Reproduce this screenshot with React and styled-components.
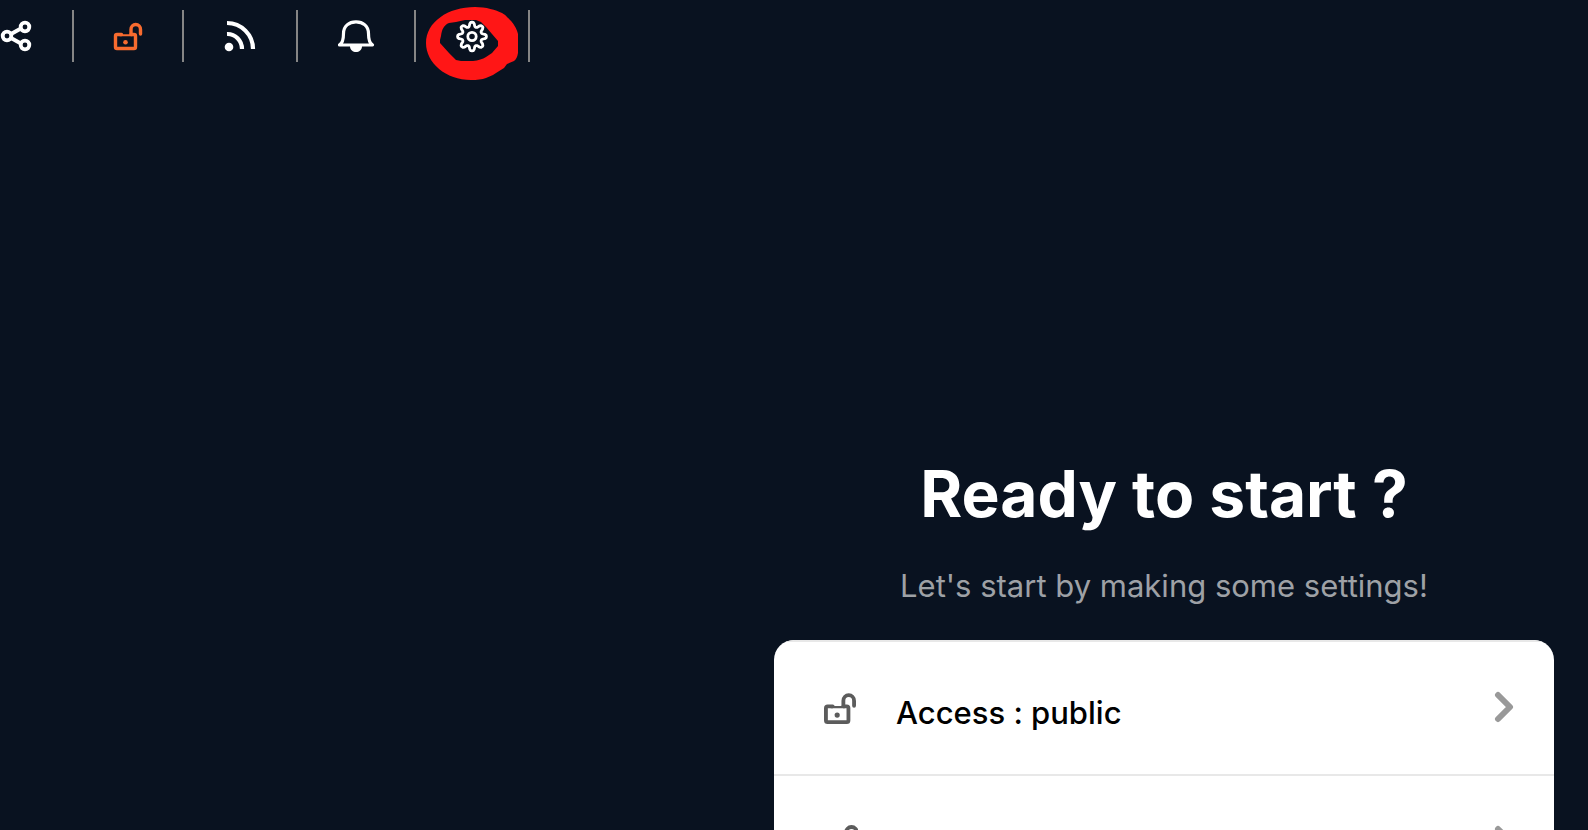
import React from 'react';
import styled, { createGlobalStyle } from 'styled-components'

function ShareIcon() {
    return (
        <svg width='34' height='36' viewBox='0 0 34 36' fill='none' stroke='#fff' strokeWidth='3.8'>
            <path d='M11 16 L20 11 M11 20 L20 25'/>
            <circle cx='7' cy='18' r='4.3'/>
            <circle cx='25' cy='9' r='4.3'/>
            <circle cx='25' cy='27' r='4.3'/>
        </svg>
    );
}

function UnlockIcon({ color, size = 32 }) {
    return (
        <svg width={size} height={size} viewBox='0 0 32 32' fill='none' stroke={color} strokeWidth='3.4' strokeLinecap='round' strokeLinejoin='round'>
            <path d='M9.5 14.5 H5 Q3.5 14.5 3.5 16 V27 Q3.5 28.5 5 28.5 H22 Q23.5 28.5 23.5 27 V16 Q23.5 14.5 22 14.5 H19'/>
            <path d='M8 15.2 H20' strokeWidth='2'/>
            <path d='M19 14 V9.5 A4.75 5 0 0 1 28.5 9.5 V14'/>
            <circle cx='13.5' cy='22.3' r='2.3' fill={color} stroke='none'/>
        </svg>
    );
}

function LockIcon() {
    return (
        <svg width='36' height='36' viewBox='0 0 36 36' fill='none' stroke='#5c5c5c' strokeWidth='4'>
            <path d='M24 16 V9 A5.5 6 0 0 1 35 9 V16'/>
        </svg>
    );
}

function FeedIcon() {
    return (
        <svg width='36' height='36' viewBox='0 0 36 36' fill='none' stroke='#fff' strokeWidth='4.2'>
            <circle cx='7' cy='29' r='4.3' fill='#fff' stroke='none'/>
            <path d='M5 16 A14.5 15 0 0 1 20 31'/>
            <path d='M5 5 A26 26 0 0 1 31 31'/>
        </svg>
    );
}

function BellIcon() {
    return (
        <svg width='40' height='36' viewBox='0 0 40 36' fill='none' stroke='#fff' strokeWidth='3.2' strokeLinejoin='round'>
            <path d='M3.5 27 C7 25 7.5 21 7.5 15.5 C7.5 8 13 3.8 20 3.8 C27 3.8 32.5 8 32.5 15.5 C32.5 21 33 25 36.5 27 Z'/>
            <path d='M14 28 H26 C26 36 14 36 14 28 Z' fill='#fff' stroke='none'/>
        </svg>
    );
}

// eight-toothed wheel, outline only
const gearOutline = Array.from({ length: 73 }, (_, i) => {
    const angle = (i * 5 * Math.PI) / 180;
    const radius = 12.2 + 2.4 * Math.tanh(1.6 * Math.cos(8 * angle));
    return `${(18 + radius * Math.sin(angle)).toFixed(2)} ${(18.5 - radius * Math.cos(angle)).toFixed(2)}`;
}).join(' L');

function GearIcon() {
    return (
        <svg width='36' height='36' viewBox='0 0 36 36' fill='none' stroke='#fff' strokeWidth='2.8' strokeLinejoin='round'>
            <path d={`M${gearOutline} Z`}/>
            <circle cx='18' cy='18.5' r='4.2'/>
        </svg>
    );
}

function Highlight() {
    return (
        <HighlightMark viewBox='0 0 92 73' aria-hidden='true'>
            <path
                fill='#ff1616'
                fillRule='evenodd'
                d='M49 0 C60 0 70 3 76 6 Q80 8 82 11 C87 15 91 22 92 27 V46 Q91 52 88 54 L81 57 L78 61 L70 66 L67 68 L60 71 Q54 73 45 73 C20 73 0 56 0 36 C0 15 22 0 49 0 Z
                M23 16 C18 18 16 22 15 29 L14 33 V36 L23 46 L30 53 L35 54 H47 Q55 53 60 50 L66 46 L72 39 V34 L66 27 L60 20 L55 15 L50 13 H39 L30 15 Z'
            />
        </HighlightMark>
    );
}

function SettingRow({ label, name, icon }) {
    return (
        <Row type='button' aria-label={name}>
            {icon}
            <RowLabel>{label}</RowLabel>
            <svg width='20' height='34' viewBox='0 0 20 34' fill='none' stroke='#999' strokeWidth='6' strokeLinecap='round' strokeLinejoin='round'>
                <path d='M4 4 L16 16 L4 28'/>
            </svg>
        </Row>
    );
}

function App() {
    return (
        <Page>
            <GlobalStyle/>
            <Toolbar>
                <ToolButton $first aria-label='Share'><ShareIcon/></ToolButton>
                <ToolButton aria-label='Access'><UnlockIcon color='#f76b2f'/></ToolButton>
                <ToolButton aria-label='Feed'><FeedIcon/></ToolButton>
                <ToolButton aria-label='Notifications'><BellIcon/></ToolButton>
                <ToolButton aria-label='Settings'>
                    <Highlight/>
                    <GearIcon/>
                </ToolButton>
            </Toolbar>
            <Start>
                <Title>Ready to start ?</Title>
                <Subtitle>Let's start by making some settings!</Subtitle>
                <Card>
                    <SettingRow label='Access : public' icon={<UnlockIcon color='#5c5c5c' size={36}/>}/>
                    <SettingRow name='Security' icon={<LockIcon/>}/>
                </Card>
            </Start>
        </Page>
    );
}

export default App;

const GlobalStyle = createGlobalStyle`
    * {
        box-sizing: border-box;
    }

    body {
        margin: 0;
        background: #091220;
        font-family: Inter, 'Liberation Sans', sans-serif;
    }
`;

const Page = styled.main`
    display: flex;
    flex-direction: column;
    height: 100vh;
    overflow: hidden;
`;

const Toolbar = styled.nav`
    display: flex;
    flex-shrink: 0;
    padding-top: 10px;
`;

const ToolButton = styled.button`
    position: relative;
    display: flex;
    align-items: center;
    height: 52px;
    padding: 0 38px 0 ${({ $first }) => $first ? '0' : '38px'};
    border: 0;
    border-right: 2px solid #858585;
    background: none;
    cursor: pointer;

    svg {
        position: relative;
        flex-shrink: 0;
    }
`;

const HighlightMark = styled.svg`
    && {
        position: absolute;
        top: -3px;
        left: 10px;
        width: 92px;
        height: 73px;
    }
`;

const Start = styled.section`
    align-self: flex-end;
    flex-shrink: 0;
    width: 780px;
    max-width: 100%;
    padding-top: 390px;
    margin-right: 34px;
    text-align: center;
`;

const Title = styled.h1`
    margin: 0;
    color: #fff;
    font-size: 64px;
    line-height: 84px;
    font-weight: 700;
`;

const Subtitle = styled.p`
    margin: 30px 0 34px;
    color: #9ea1a6;
    font-size: 31px;
    line-height: 40px;
`;

const Card = styled.div`
    overflow: hidden;
    border-radius: 20px;
    background: #fff;
`;

const Row = styled.button`
    display: flex;
    align-items: center;
    width: 100%;
    height: 134px;
    padding: 0 40px 0 48px;
    border: 0;
    border-top: 2px solid #e8e8e8;
    background: none;
    color: #000;
    font: inherit;
    cursor: pointer;
`;

const RowLabel = styled.span`
    flex: 1;
    padding: 10px 0 0 38px;
    font-size: 31px;
    line-height: 40px;
    font-weight: 500;
    text-align: left;
`;
